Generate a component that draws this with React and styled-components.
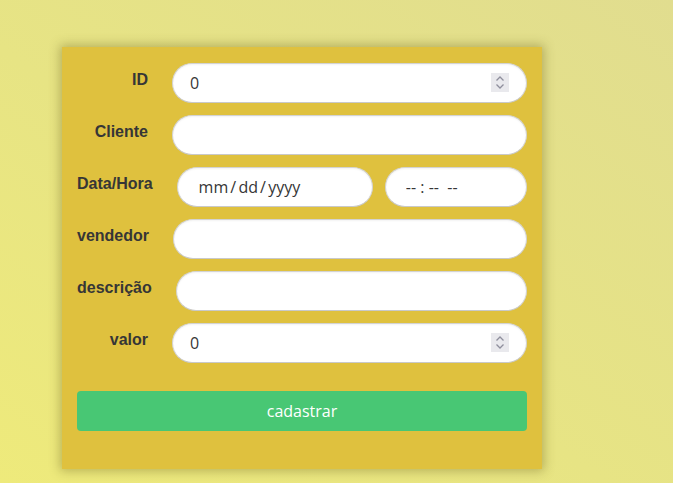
import React from "react";
import styled, { createGlobalStyle } from "styled-components";

const Global = createGlobalStyle`
  html, body { margin: 0; padding: 0; }
  body {
    width: 673px;
    height: 483px;
    overflow: hidden;
    background: linear-gradient(to top right, #eeea7b 0%, #e7e484 45%, #e1dd8f 100%);
    font-family: "Liberation Sans", Arial, sans-serif;
  }
`;

const Page = styled.div`
  padding: 47px 0 0 62px;
`;

const Card = styled.form`
  width: 480px;
  box-sizing: border-box;
  padding: 16px 15px 38px 15px;
  background: #dfc13e;
  box-shadow: 0 0 10px 2px rgba(120, 110, 40, 0.45);
  display: flex;
  flex-direction: column;
  gap: 12px;
`;

const Row = styled.div`
  display: flex;
  align-items: flex-start;
  height: 40px;
`;

const Label = styled.label`
  min-width: 71px;
  margin-right: 24px;
  flex-shrink: 0;
  text-align: right;
  font-family: "Liberation Sans", Arial, sans-serif;
  font-weight: 700;
  font-size: 16px;
  color: #363636;
  padding-top: 8px;
  line-height: 18px;
  white-space: nowrap;
`;

const Controls = styled.div`
  flex: 1;
  display: flex;
  gap: 12px;
  min-width: 0;
`;

const Box = styled.div`
  position: relative;
  flex: ${(p) => p.$grow || 1} 1 0;
  height: 40px;
  min-width: 0;
`;

const Input = styled.input`
  box-sizing: border-box;
  width: 100%;
  height: 40px;
  border: 1px solid #d3d3d3;
  border-bottom-color: #c9c9c9;
  border-radius: 999px;
  background: #fff;
  box-shadow: inset 0 1px 2px rgba(10, 10, 10, 0.05);
  padding: 0 0 0 ${(p) => p.$pad || 17}px;
  font-family: "Open Sans", "Noto Sans", sans-serif;
  font-size: 16px;
  color: #363636;
  outline: none;
  word-spacing: ${(p) => p.$ws || 0}px;
`;

const Spinner = styled.span`
  position: absolute;
  right: 18px;
  top: 10px;
  width: 18px;
  height: 19px;
  background: #e9e9ed;
  display: flex;
  align-items: center;
  justify-content: center;
  pointer-events: none;
`;

const Button = styled.button`
  margin-top: 16px;
  height: 40px;
  border: none;
  border-radius: 4px;
  background: #48c774;
  color: #fff;
  font-family: "Open Sans", "Noto Sans", sans-serif;
  font-size: 16px;
  cursor: pointer;
`;

function Chevrons() {
  return (
    <svg width="10" height="15" viewBox="0 0 10 15" fill="none" stroke="#8f8f9d" strokeWidth="1.3">
      <path d="M1.5 5.5 L5 2 L8.5 5.5" />
      <path d="M1.5 9.5 L5 13 L8.5 9.5" />
    </svg>
  );
}

function NumberField({ value }) {
  return (
    <Box>
      <Input type="text" defaultValue={value} />
      <Spinner>
        <Chevrons />
      </Spinner>
    </Box>
  );
}

export default function App() {
  return (
    <>
      <Global />
      <Page>
        <Card onSubmit={(e) => e.preventDefault()}>
          <Row>
            <Label>ID</Label>
            <Controls>
              <NumberField value="0" />
            </Controls>
          </Row>
          <Row>
            <Label>Cliente</Label>
            <Controls>
              <Box>
                <Input type="text" />
              </Box>
            </Controls>
          </Row>
          <Row>
            <Label>Data/Hora</Label>
            <Controls>
              <Box $grow={196}>
                <Input type="text" $pad={21} defaultValue="mm / dd / yyyy" $ws={-2} />
              </Box>
              <Box $grow={142}>
                <Input type="text" $pad={20} defaultValue="-- : --  --" style={{ whiteSpace: "pre" }} />
              </Box>
            </Controls>
          </Row>
          <Row>
            <Label>vendedor</Label>
            <Controls>
              <Box>
                <Input type="text" />
              </Box>
            </Controls>
          </Row>
          <Row>
            <Label>descrição</Label>
            <Controls>
              <Box>
                <Input type="text" />
              </Box>
            </Controls>
          </Row>
          <Row>
            <Label>valor</Label>
            <Controls>
              <NumberField value="0" />
            </Controls>
          </Row>
          <Button type="submit">cadastrar</Button>
        </Card>
      </Page>
    </>
  );
}
